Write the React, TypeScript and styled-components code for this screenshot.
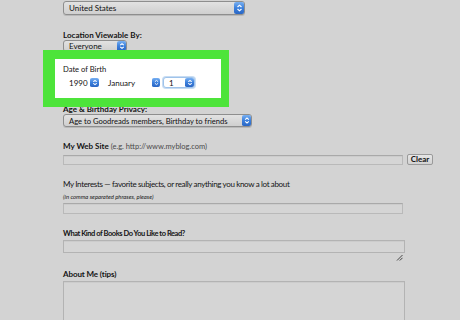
import React from "react";
import styled, { createGlobalStyle } from "styled-components";

const Global = createGlobalStyle`
  html, body { margin: 0; padding: 0; background: #d3d3d3; }
  body { font-family: Lato, "Open Sans", Arial, sans-serif; }
`;

const Page = styled.div`
  width: 460px;
  height: 320px;
  overflow: hidden;
  box-sizing: border-box;
  padding: 1px 0 0 63px;
  background: #d3d3d3;
  color: #141414;
  font-family: Lato, "Open Sans", Arial, sans-serif;
  display: flex;
  flex-direction: column;
  align-items: flex-start;
`;

const Label = styled.div<{ $mt?: number; $weight?: number; $size?: number; $ls?: number }>`
  margin-top: ${(p) => p.$mt ?? 0}px;
  font-size: ${(p) => p.$size ?? 8}px;
  letter-spacing: ${(p) => p.$ls ?? 0}px;
  line-height: 10px;
  font-weight: ${(p) => p.$weight ?? 700};
  white-space: nowrap;
  position: relative;
`;

const Hint = styled.span`
  font-weight: 400;
  color: #4a4a4a;
  font-size: 7.5px;
`;

const SubNote = styled.div`
  margin-top: 3px;
  font-size: 5.9px;
  line-height: 9px;
  font-style: italic;
  color: #1a1a1a;
`;

const SelectBox = styled.div<{
  $w: number;
  $h: number;
  $mt?: number;
  $plain?: boolean;
  $focus?: boolean;
  $fs?: number;
}>`
  margin-top: ${(p) => p.$mt ?? 0}px;
  width: ${(p) => p.$w}px;
  height: ${(p) => p.$h}px;
  box-sizing: border-box;
  display: flex;
  align-items: center;
  border-radius: 3px;
  border: 1px solid
    ${(p) => (p.$focus ? "#9fc3ea" : p.$plain ? "#ffffff" : "#8e8e8e")};
  background: ${(p) =>
    p.$plain || p.$focus ? "#ffffff" : "linear-gradient(#e2e2e2, #cfcfcf)"};
  box-shadow: ${(p) =>
    p.$plain ? "none" : p.$focus ? "0 0 0 1px #c7dcf3" : "0 1px 0 rgba(0,0,0,0.12)"};
  font-size: ${(p) => p.$fs ?? 8}px;
  line-height: 10px;
  color: #111;
  overflow: hidden;
  flex-shrink: 0;
`;

const SelectText = styled.span`
  flex: 1;
  padding-left: 5px;
  white-space: nowrap;
  overflow: hidden;
`;

const StepperWrap = styled.span<{ $w: number }>`
  width: ${(p) => p.$w}px;
  height: 100%;
  display: block;
  flex-shrink: 0;
  margin-right: -1px;
`;

const Stepper: React.FC<{ w?: number }> = ({ w = 10 }) => (
  <StepperWrap $w={w}>
    <svg width="100%" height="100%" viewBox="0 0 10 12" preserveAspectRatio="none">
      <defs>
        <linearGradient id="stepg" x1="0" y1="0" x2="0" y2="1">
          <stop offset="0" stopColor="#78b0f2" />
          <stop offset="0.5" stopColor="#3c80dc" />
          <stop offset="1" stopColor="#2a66c4" />
        </linearGradient>
      </defs>
      <rect x="0" y="0" width="10" height="12" rx="2" fill="url(#stepg)" />
      <path d="M3.2 5 L5 3.2 L6.8 5" stroke="#fff" strokeWidth="1.1" fill="none" />
      <path d="M3.2 7 L5 8.8 L6.8 7" stroke="#fff" strokeWidth="1.1" fill="none" />
    </svg>
  </StepperWrap>
);

const Select: React.FC<{
  w: number;
  h: number;
  mt?: number;
  text: string;
  plain?: boolean;
  focus?: boolean;
  stepW?: number;
  fs?: number;
}> = ({ w, h, mt, text, plain, focus, stepW, fs }) => (
  <SelectBox $w={w} $h={h} $mt={mt} $plain={plain} $focus={focus} $fs={fs}>
    <SelectText>{text}</SelectText>
    <Stepper w={stepW} />
  </SelectBox>
);

const Highlight = styled.div`
  position: relative;
  z-index: 1;
  margin: -2px 0 0 -20px;
  width: 186px;
  box-sizing: border-box;
  border-style: solid;
  border-color: #4de43a;
  border-width: 9px 8px 9px 12px;
  background: #ffffff;
  padding: 5px 0 10px 8px;
`;

const Row = styled.div<{ $mt?: number; $gap?: number }>`
  margin-top: ${(p) => p.$mt ?? 0}px;
  display: flex;
  align-items: center;
  gap: ${(p) => p.$gap ?? 0}px;
`;

const TextInput = styled.div<{ $w: number; $h: number; $mt?: number }>`
  margin-top: ${(p) => p.$mt ?? 0}px;
  width: ${(p) => p.$w}px;
  height: ${(p) => p.$h}px;
  box-sizing: border-box;
  border: 1px solid #b9b9b9;
  border-top-color: #a9a9a9;
  background: #d5d5d5;
  box-shadow: inset 0 1px 0 rgba(0, 0, 0, 0.04);
  flex-shrink: 0;
`;

const TextArea = styled(TextInput)`
  position: relative;
  border-color: #b3b3b3;
`;

const Grip = styled.span`
  position: absolute;
  right: 1px;
  bottom: 0px;
  width: 7px;
  height: 7px;
  display: block;
`;

const ClearButton = styled.div`
  width: 26px;
  height: 11px;
  box-sizing: border-box;
  border: 1px solid #9a9a9a;
  border-radius: 2px;
  background: linear-gradient(#e6e6e6, #d2d2d2);
  font-size: 8px;
  line-height: 9px;
  font-weight: 700;
  text-align: center;
  color: #111;
`;

export default function App() {
  return (
    <>
      <Global />
      <Page>
        <Select w={182} h={14} text="United States" stepW={11} />
        <Label $mt={15}>Location Viewable By:</Label>
        <Select w={64} h={12} text="Everyone" />

        <Highlight>
          <Label $weight={400} $size={7.6}>Date of Birth</Label>
          <Row $mt={3} $gap={2}>
            <Select w={37} h={11} text="1990" plain />
            <Select w={59} h={11} text="January" plain stepW={9} />
            <Select w={32} h={11} text="1" focus />
          </Row>
        </Highlight>

        <Label $mt={-3}>Age &amp; Birthday Privacy:</Label>
        <Select
          w={189}
          h={13}
          fs={7.6}
          text="Age to Goodreads members, Birthday to friends"
        />

        <Label $mt={14}>
          My Web Site <Hint>(e.g. http://www.myblog.com)</Hint>
        </Label>
        <Row $mt={2} $gap={4}>
          <TextInput $w={340} $h={10} />
          <ClearButton>Clear</ClearButton>
        </Row>

        <Label $mt={14} $weight={400} $size={8} $ls={-0.35}>
          My Interests — favorite subjects, or really anything you know a lot about
        </Label>
        <SubNote>(in comma separated phrases, please)</SubNote>
        <TextInput $w={340} $h={11} $mt={2} />

        <Label $mt={15} $size={7.5} $ls={-0.45}>
          What Kind of Books Do You Like to Read?
        </Label>
        <TextArea $w={342} $h={13} $mt={1}>
          <Grip>
            <svg width="7" height="7" viewBox="0 0 7 7">
              <path d="M6.5 1 L1 6.5 M6.5 3.8 L3.8 6.5" stroke="#333" strokeWidth="0.9" />
            </svg>
          </Grip>
        </TextArea>

        <Label $mt={16} $ls={-0.1}>About Me (tips)</Label>
        <TextArea $w={342} $h={60} $mt={2} />
      </Page>
    </>
  );
}
